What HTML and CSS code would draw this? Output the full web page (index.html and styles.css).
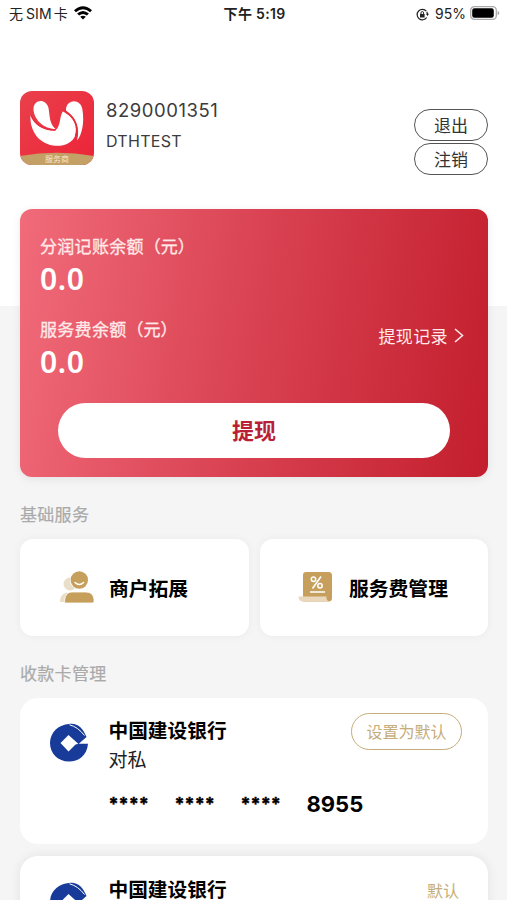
FILE: index.html
```html
<!DOCTYPE html>
<html lang="zh-CN">
<head>
<meta charset="utf-8">
<meta name="viewport" content="width=device-width, initial-scale=1">
<title>我的</title>
<link rel="stylesheet" href="styles.css">
</head>
<body>
<div class="screen">
  <header class="top">
    <div class="status">
      <div class="status-left"><span class="carrier">无<span class="sim">SIM</span>卡</span>
        <svg class="wifi" width="18" height="14" viewBox="0 0 18 14"><path d="M0 4.300Q9-3.700 18 4.300L16.100 6.300Q9 .2 1.900 6.300ZM3.100 7.600Q9 2.600 14.900 7.600L12.900 9.600Q9 6.400 5.100 9.600ZM6.200 10.800Q9 8.600 11.800 10.800L9 13.600Z"/></svg>
      </div>
      <div class="status-time">下午 5:19</div>
      <div class="status-right">
        <svg class="lock" width="13" height="13" viewBox="0 0 13 13"><path d="M10.300 3.200A5.200 5.200 0 1 0 10.700 9.500M10.700 3.800Q11.600 5 11.500 6.500" fill="none" stroke="#222" stroke-width="1.200"/><path d="M9.900 5.700h3.100l-1.500 2.300zM4 5.900h4.600v3.600H4z" fill="#222"/><path d="M5 6V4.900a1.300 1.300 0 0 1 2.600 0V6" fill="none" stroke="#222"/></svg>
        <span>95%</span>
        <svg class="battery" width="30" height="14" viewBox="0 0 30 14"><rect x=".7" y=".7" width="25.600" height="12.600" rx="3.600" fill="#fff" stroke="#aaa" stroke-width="1.300"/><rect x="2.200" y="2.200" width="21.600" height="9.600" rx="2.200"/><path d="M27.600 4.800q1.800.7 1.800 2.200t-1.800 2.200z" fill="#aaa"/></svg>
      </div>
    </div>
    <div class="profile">
      <svg class="logo" width="74" height="74" viewBox="0 0 74 74">
        <defs><linearGradient id="lg" x1="0" y1="0" x2="1" y2="1"><stop offset="0" stop-color="#e9414b"/><stop offset="1" stop-color="#ed2338"/></linearGradient><clipPath id="lc"><rect width="74" height="74" rx="12"/></clipPath></defs>
        <g clip-path="url(#lc)">
          <rect width="74" height="74" fill="url(#lg)"/>
          <path d="M0 65Q37 58.500 74 65V74H0Z" fill="#c3a066"/>
          <path d="M13.500 19C13 8 26 7 28.500 17C30 25 29 32 35.500 38C24 38 14.500 29 13.500 19Z" fill="#fff"/>
          <path d="M46 18C47 8 61 7 62.500 19C64.500 32 62 44 57 49.500C60.500 37 56 26 46 19.500Z" fill="#fff"/>
          <path d="M10.500 24C14 34 24 39.500 35 39.500C41 36 39 26 43 20C54 26 58.500 35 55.500 44C52 53 42 56 33 54.500C18 52 9.500 39 10.500 24Z" fill="#fff"/>
          <path d="M11 24C15 34 24 39.500 35.500 39M43 19.500C54 25 59 35 55.500 45" fill="none" stroke="#e52f3e" stroke-width="1.500"/>
        </g>
        <text x="37" y="70.500" text-anchor="middle" class="logo-text">服务商</text>
      </svg>
      <div class="who"><div class="phone">8290001351</div><div class="nick">DTHTEST</div></div>
      <div class="account-actions"><button class="pill">退出</button><button class="pill">注销</button></div>
    </div>
  </header>

  <main class="content">
    <section class="balance">
      <div class="balance-label">分润记账余额<span class="unit">（元）</span></div>
      <div class="amount">0.0</div>
      <div class="balance-row">
        <div><div class="balance-label">服务费余额<span class="unit">（元）</span></div><div class="amount">0.0</div></div>
        <a class="records">提现记录<svg width="10" height="15" viewBox="0 0 10 15"><path d="M1 1l7.500 6.500L1 14" fill="none" stroke="#ffe9e9" stroke-width="1.600"/></svg></a>
      </div>
      <button class="withdraw">提现</button>
    </section>

    <h2 class="heading heading-services">基础服务</h2>
    <div class="services">
      <div class="service">
        <svg width="36" height="36" viewBox="0 0 36 36"><circle cx="10" cy="14" r="6.500" fill="#e9dfc9"/><path d="M0 32C0 27 2 23.500 7 22.500V32Z" fill="#e9dfc9"/><circle cx="19.300" cy="10" r="9.400" fill="#fff"/><circle cx="19.300" cy="10" r="8.700" fill="#c69f5d"/><path d="M15 12.500q4.300 4 8.600 0" fill="none" stroke="#fff" stroke-width="1.500" stroke-linecap="round"/><path d="M4.500 33C4.500 26 7 22 12 22H26Q33 22 34 29V31.500Q34 33 32 33Z" fill="#c69f5d" stroke="#fff" stroke-width=".8"/></svg>
        <span>商户拓展</span>
      </div>
      <div class="service">
        <svg width="36" height="36" viewBox="0 0 36 36"><path d="M3 5Q3 2 6 2H28.500Q32 2 32 5.500V28Q32 31.500 28.500 31.500H3Z" fill="#c69f5d"/><path d="M-1.500 26.500H26.500Q26 30 29 31.500H3Q-1.500 31.500 -1.500 26.500Z" fill="#ead8bd"/><path d="M21 6.500L12.500 18.500M10 22H25" fill="none" stroke="#fff" stroke-width="1.600"/><circle cx="13.500" cy="9.300" r="2.200" fill="none" stroke="#fff" stroke-width="1.500"/><circle cx="20" cy="15.700" r="2.200" fill="none" stroke="#fff" stroke-width="1.500"/></svg>
        <span>服务费管理</span>
      </div>
    </div>

    <h2 class="heading heading-cards">收款卡管理</h2>
    <article class="bank">
      <svg class="ccb" width="40" height="40" viewBox="0 0 40 40"><g id="ccb-mark"><path d="M20 1C28 -.5 34 5 37.500 14L29.500 21L19.500 12L11.500 20L19.500 28.500L26.500 21.500L30 20.700H39C38 33 29 38.500 20 38.500C9 38.500 1 30.500 1 20C1 9 10 1.500 20 1Z" fill="#183b9a"/><path d="M20.500 1.800Q29 4 35.500 12.500" fill="none" stroke="#fff" stroke-width="1"/></g></svg>
      <div class="bank-info"><div class="bank-name">中国建设银行</div><div class="bank-type">对私</div>
        <div class="number"><span class="mask">****</span><span class="mask">****</span><span class="mask">****</span><span class="tail">8955</span></div></div>
      <button class="set-default">设置为默认</button>
    </article>
    <article class="bank bank-shadow">
      <svg class="ccb" width="40" height="40" viewBox="0 0 40 40"><use href="#ccb-mark"/></svg>
      <div class="bank-info"><div class="bank-name">中国建设银行</div></div>
      <span class="is-default">默认</span>
    </article>
  </main>
</div>
</body>
</html>
```

FILE: styles.css
```css
* { box-sizing: border-box; }
body { margin: 0; font-family: Inter, "Noto Sans CJK SC", sans-serif; color: #000; }
button { font-family: inherit; background: #fff; padding: 0; display: block; }
svg { display: block; flex: none; overflow: visible; }
.screen { height: 900px; overflow: hidden; background: linear-gradient(#fff 306px, #f5f5f5 306px); }

.status { height: 28px; padding: 0 7px 0 9px; display: grid; grid-template-columns: 1fr auto 1fr; align-items: center; font-size: 14px; line-height: 28px; color: #222; }
.status-left { display: flex; align-items: center; gap: 6px; }
.sim { margin: 0 2px 0 3px; letter-spacing: .1px; }
.wifi { margin-top: -3px; fill: #000; }
.status-time { font-weight: 600; letter-spacing: .3px; }
.status-right { display: flex; align-items: center; justify-content: flex-end; gap: 4px; }
.lock { margin-right: 2px; }
.battery { margin-top: -2px; }

.profile { display: flex; height: 181px; padding: 63px 19px 0 20px; }
.logo-text { font-size: 8px; fill: #f4e6cf; }
.who { margin: 7px 0 0 12px; color: #3c3c3c; flex: 1; }
.phone { font-size: 18.500px; line-height: 24px; letter-spacing: .55px; }
.nick { font-size: 16px; line-height: 24px; margin-top: 7px; letter-spacing: .3px; }
.account-actions { display: flex; flex-direction: column; gap: 2px; margin-top: 18px; }
.pill { width: 74px; height: 32px; border: 1.5px solid #555; border-radius: 16px; font-size: 17px; line-height: 30px; padding-top: 1px; color: #333; }

.content { padding: 0 19px 0 20px; }
.balance { height: 268px; padding: 25px 20px 0; border-radius: 12px; color: #fff; background: linear-gradient(99deg, #f16b7a 0%, #d94252 49%, #c31e2d 100%); box-shadow: 0 2px 10px rgba(0,0,0,.08); }
.balance-label { font-size: 17px; line-height: 26px; letter-spacing: .3px; color: #ffe9e9; -webkit-text-stroke: .3px; }
.unit { letter-spacing: 0; display: inline-block; }
.amount { font: 600 30px/38px "Noto Sans", sans-serif; letter-spacing: .7px; height: 38px; }
.balance-row { display: flex; justify-content: space-between; margin-top: 19px; }
.records { display: flex; align-items: center; gap: 6px; height: 26px; margin: 5px 4px 0 0; font-size: 17px; letter-spacing: .4px; color: #ffe9e9; }
.withdraw { width: 392px; height: 55px; margin: 22px 0 0 18px; border: 0; border-radius: 28px; color: #b91f35; font-size: 22px; line-height: 52px; font-weight: 700; }

.heading { margin: 0; font-size: 17px; line-height: 26px; font-weight: 400; color: #aaa; letter-spacing: .3px; -webkit-text-stroke: .2px; }
.heading-services { margin-top: 25px; }
.services { display: grid; grid-template-columns: 229px 228px; gap: 11px; margin-top: 11px; }
.service { height: 97px; padding-left: 40px; display: flex; align-items: center; gap: 13px; background: #fff; border-radius: 13px; box-shadow: 0 0 9px rgba(0,0,0,.05); font-size: 19.800px; font-weight: 700; }
.service span { margin-top: -1px; }
.heading-cards { margin-top: 25px; }
.bank { display: flex; height: 146px; margin-top: 11px; padding: 19px 26px 0 29px; background: #fff; border-radius: 18px; }
.bank-shadow { margin-top: 12px; padding-top: 20px; box-shadow: 0 0 12px rgba(0,0,0,.08); }
.ccb { margin-top: 6px; }
.bank-info { flex: 1; margin-left: 19.500px; }
.bank-name { font-size: 19.700px; line-height: 28px; font-weight: 700; }
.bank-type { font-size: 19px; line-height: 30px; margin-top: 1px; color: #222; }
.number { display: flex; gap: 26px; margin-top: 13px; font-size: 22px; line-height: 30px; font-weight: 700; }
.mask { width: 40px; font-size: 18px; -webkit-text-stroke: .4px; }
.tail { font-weight: 650; }
.set-default { width: 111px; height: 37px; margin: -4px 0 0 -111px; border: 1.500px solid #c5ad79; border-radius: 19px; color: #c5ad79; font-size: 16px; line-height: 35px; padding-top: 1px; }
.is-default { color: #c5ad79; font-size: 16px; line-height: 30px; margin: 0 3px; }
```
